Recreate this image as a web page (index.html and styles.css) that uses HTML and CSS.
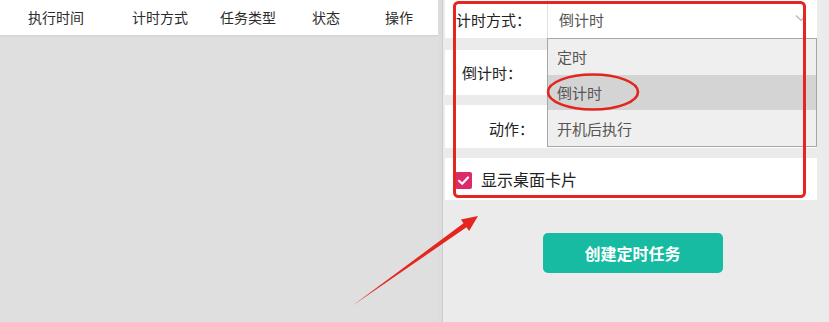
FILE: index.html
```html
<!DOCTYPE html>
<html lang="zh">
<head>
<meta charset="utf-8">
<link rel="stylesheet" href="styles.css">
</head>
<body>
<div class="page">
  <div class="left">
    <div class="thead">
      <div class="th th-1">执行时间</div>
      <div class="th th-2">计时方式</div>
      <div class="th th-3">任务类型</div>
      <div class="th th-4">状态</div>
      <div class="th th-5">操作</div>
    </div>
  </div>
  <div class="gutter"></div>
  <div class="right">
    <div class="row row-1">
      <div class="label label-1">计时方式：</div>
      <div class="select">
        <span class="select-text">倒计时</span>
        <svg class="chev" width="12" height="8" viewBox="0 0 12 8"><polyline points="1,1.5 6,6.5 11,1.5" fill="none" stroke="#b5b5b5" stroke-width="1.2"/></svg>
      </div>
      <div class="dropdown">
        <div class="opt">定时</div>
        <div class="opt opt-active">倒计时</div>
        <div class="opt">开机后执行</div>
      </div>
    </div>
    <div class="row row-2">
      <div class="label label-2">倒计时：</div>
    </div>
    <div class="row row-3">
      <div class="label label-3">动作：</div>
    </div>
    <div class="row row-4">
      <span class="checkbox">
        <svg width="17" height="17" viewBox="0 0 17 17"><polyline points="4,8.8 7.2,11.8 13,5.5" fill="none" stroke="#fff" stroke-width="2.2" stroke-linecap="round" stroke-linejoin="round"/></svg>
      </span>
      <span class="check-text">显示桌面卡片</span>
    </div>
    <div class="btn-wrap">
      <button class="btn">创建定时任务</button>
    </div>
  </div>
  <svg class="annot" width="829" height="322" viewBox="0 0 829 322">
    <rect x="454.5" y="2.5" width="350" height="194" rx="4" fill="none" stroke="#e3261f" stroke-width="3"/>
    <ellipse cx="593" cy="92" rx="45" ry="17.5" fill="none" stroke="#e0261e" stroke-width="2.6"/>
    <polygon points="352,306 463.5,223.3 460.9,219.6 478,216 469.1,231 466.5,227.3" fill="#e3261f"/>
  </svg>
</div>
</body>
</html>
```

FILE: styles.css
```css
* { box-sizing: border-box; }
html, body { margin: 0; padding: 0; }
body {
  width: 829px;
  height: 322px;
  overflow: hidden;
  font-family: "Noto Sans CJK SC", "Noto Sans", sans-serif;
  background: #dfdfdf;
}
.page {
  position: relative;
  display: flex;
  width: 829px;
  height: 322px;
}
.left {
  width: 438px;
  background: #dfdfdf;
}
.thead {
  display: flex;
  height: 35px;
  background: #fff;
  box-shadow: 0 1px 2px rgba(0,0,0,0.08);
  align-items: center;
}
.th {
  font-size: 14px;
  color: #2b2b2b;
  text-align: center;
  line-height: 35px;
}
.th-1 { width: 112px; }
.th-2 { width: 96px; }
.th-3 { width: 80px; }
.th-4 { width: 76px; }
.th-5 { width: 70px; }
.gutter {
  width: 5px;
  background: #dcdcdc;
  border-right: 1px solid #cdcdcd;
}
.right {
  flex: 1;
  background: #ebebeb;
  padding: 0 12px 0 2px;
  display: flex;
  flex-direction: column;
}
.row {
  background: #fff;
  display: flex;
  align-items: center;
  margin-bottom: 10px;
}
.row-1 { position: relative; height: 38px; margin-bottom: 12px; }
.row-2 { height: 45px; }
.row-3 { height: 43px; }
.row-4 { height: 42px; }
.label {
  font-size: 15px;
  color: #222;
  white-space: nowrap;
}
.label-1 { width: 102px; padding-left: 11px; padding-top: 1px; }
.label-2 { padding-left: 17px; }
.label-3 { padding-left: 44px; padding-top: 4px; }
.select {
  flex: 1;
  align-self: stretch;
  border-left: 1px solid #e2e2e2;
  display: flex;
  align-items: center;
  justify-content: space-between;
  padding: 1px 10px 0 11px;
}
.select-text {
  font-size: 15px;
  color: #555;
}
.chev { margin-top: -3px; }
.dropdown {
  position: absolute;
  left: 102px;
  top: 38px;
  width: 270px;
  border: 1px solid #a6a6a6;
  background: #efefef;
  z-index: 2;
}
.opt {
  height: 35.7px;
  font-size: 15px;
  color: #555;
  padding-left: 9px;
  display: flex;
  align-items: center;
}
.opt-active { background: #d4d4d4; }
.row-4 { padding-left: 10px; }
.checkbox {
  width: 17px;
  height: 17px;
  background: #dc2a6c;
  border-radius: 2px;
  display: inline-flex;
  margin-right: 9px;
  margin-top: 2px;
}
.check-text {
  font-size: 16px;
  color: #222;
}
.btn-wrap {
  display: flex;
  justify-content: center;
  padding-top: 23px;
  padding-left: 3px;
}
.btn {
  width: 180px;
  height: 40px;
  border: none;
  border-radius: 5px;
  background: #17bba2;
  color: #fff;
  font-family: "Noto Sans CJK SC", sans-serif;
  font-size: 16px;
  font-weight: bold;
}
.annot {
  position: absolute;
  left: 0;
  top: 0;
  pointer-events: none;
  z-index: 5;
}
```
